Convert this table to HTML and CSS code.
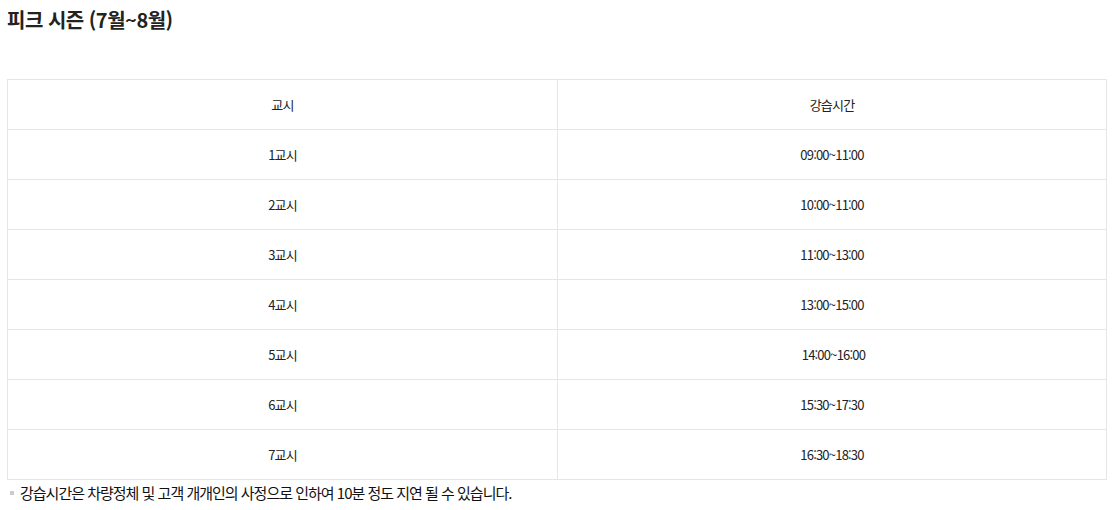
FILE: index.html
```html
<!DOCTYPE html>
<html lang="ko">
<head>
<meta charset="utf-8">
<link rel="stylesheet" href="styles.css">
</head>
<body>
<div class="wrap">
  <h2 class="title">피크 시즌 (7월~8월)</h2>
  <table class="schedule">
    <thead>
      <tr><th>교시</th><th>강습시간</th></tr>
    </thead>
    <tbody>
      <tr><td>1교시</td><td>09:00~11:00</td></tr>
      <tr><td>2교시</td><td>10:00~11:00</td></tr>
      <tr><td>3교시</td><td>11:00~13:00</td></tr>
      <tr><td>4교시</td><td>13:00~15:00</td></tr>
      <tr><td>5교시</td><td>&nbsp;14:00~16:00</td></tr>
      <tr><td>6교시</td><td>15:30~17:30</td></tr>
      <tr><td>7교시</td><td>16:30~18:30</td></tr>
    </tbody>
  </table>
  <p class="note">강습시간은 차량정체 및 고객 개개인의 사정으로 인하여 10분 정도 지연 될 수 있습니다.</p>
</div>
</body>
</html>
```
FILE: styles.css
```css
html, body {
  margin: 0;
  padding: 0;
  background: #fff;
}
body {
  font-family: "Noto Sans CJK KR", "Noto Sans", sans-serif;
  color: #222;
}
.wrap {
  padding: 0 8px 0 7px;
}
.title {
  margin: 0;
  padding-top: 5px;
  font-size: 20px;
  font-weight: 700;
  line-height: 30px;
  letter-spacing: -0.5px;
  color: #222;
}
.schedule {
  margin-top: 44px;
  width: 1100px;
  border-collapse: collapse;
  table-layout: fixed;
}
.schedule th,
.schedule td {
  border: 1px solid #e6e6e6;
  height: 49px;
  padding: 0;
  text-align: center;
  vertical-align: middle;
  font-size: 13px;
  font-weight: 400;
  letter-spacing: -0.8px;
  color: #222;
}
.schedule th:first-child,
.schedule td:first-child {
  width: 549px;
}
.note {
  margin: 3px 0 0;
  font-size: 15px;
  line-height: 20px;
  letter-spacing: -1px;
  color: #111;
  display: flex;
  align-items: center;
}
.note::before {
  content: "";
  display: inline-block;
  width: 4px;
  height: 4px;
  background: #ccc;
  margin: 0 6px 0 3px;
}
```
